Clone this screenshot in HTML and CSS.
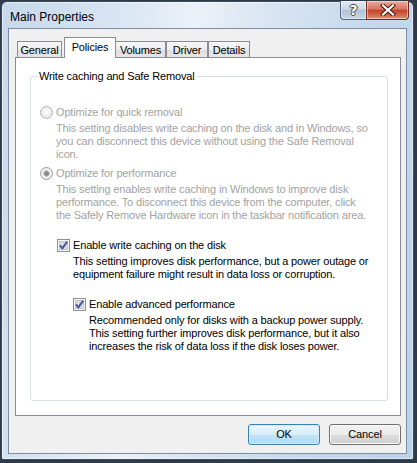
FILE: index.html
```html
<!DOCTYPE html>
<html>
<head>
    <title>Main Properties</title>
    <link rel="stylesheet" href="styles.css">
</head>
<body>
    <div class="window">
        <div class="titlebar">
            <span class="title">Main Properties</span>
            <div class="caption-buttons">
                <div class="cap-btn help">?</div>
                <div class="cap-btn close">
                    <svg width="16" height="12" viewBox="0 0 16 12">
                        <path d="M3 1.5 L13 10.5 M13 1.5 L3 10.5" stroke="#4a1a14" stroke-width="4.2" stroke-linecap="square"/>
                        <path d="M3 1.5 L13 10.5 M13 1.5 L3 10.5" stroke="#fff" stroke-width="2.2" stroke-linecap="square"/>
                    </svg>
                </div>
            </div>
        </div>

        <div class="client">
            <div class="tabs">
                <div class="tab tab-general">General</div>
                <div class="tab tab-policies active">Policies</div>
                <div class="tab tab-volumes">Volumes</div>
                <div class="tab tab-driver">Driver</div>
                <div class="tab tab-details">Details</div>
            </div>

            <div class="tab-panel">
                <fieldset class="group">
                    <legend>Write caching and Safe Removal</legend>

                    <div class="option disabled">
                        <span class="radio"></span>
                        <div class="option-body">
                            <div class="option-label">Optimize for quick removal</div>
                            <div class="option-desc">This setting disables write caching on the disk and in Windows, so<br>you can disconnect this device without using the Safe Removal<br>icon.</div>
                        </div>
                    </div>

                    <div class="option disabled second">
                        <span class="radio checked"></span>
                        <div class="option-body">
                            <div class="option-label">Optimize for performance</div>
                            <div class="option-desc">This setting enables write caching in Windows to improve disk<br>performance. To disconnect this device from the computer, click<br>the Safely Remove Hardware icon in the taskbar notification area.</div>

                            <div class="option sub first-check">
                                <span class="checkbox">
                                    <svg width="13" height="13" viewBox="0 0 13 13">
                                        <rect x="0.5" y="0.5" width="12" height="12" fill="#f6f6f6" stroke="#8e8f8f"/>
                                        <rect x="2.5" y="2.5" width="8" height="8" fill="#dcdde0" stroke="#c4c6ca"/>
                                        <path d="M3 6.3 L5.4 9.4 L10.2 2.6" fill="none" stroke="#45599c" stroke-width="2"/>
                                    </svg>
                                </span>
                                <div class="option-body">
                                    <div class="option-label">Enable write caching on the disk</div>
                                    <div class="option-desc">This setting improves disk performance, but a power outage or<br>equipment failure might result in data loss or corruption.</div>

                                    <div class="option sub">
                                        <span class="checkbox">
                                            <svg width="13" height="13" viewBox="0 0 13 13">
                                                <rect x="0.5" y="0.5" width="12" height="12" fill="#f6f6f6" stroke="#8e8f8f"/>
                                                <rect x="2.5" y="2.5" width="8" height="8" fill="#dcdde0" stroke="#c4c6ca"/>
                                                <path d="M3 6.3 L5.4 9.4 L10.2 2.6" fill="none" stroke="#45599c" stroke-width="2"/>
                                            </svg>
                                        </span>
                                        <div class="option-body">
                                            <div class="option-label">Enable advanced performance</div>
                                            <div class="option-desc">Recommended only for disks with a backup power supply.<br>This setting further improves disk performance, but it also<br>increases the risk of data loss if the disk loses power.</div>
                                        </div>
                                    </div>
                                </div>
                            </div>
                        </div>
                    </div>
                </fieldset>
            </div>

            <div class="buttons">
                <button class="btn default">OK</button>
                <button class="btn">Cancel</button>
            </div>
        </div>
    </div>
</body>
</html>
```

FILE: styles.css
```css
* {
    box-sizing: border-box;
}

body {
    margin: 0;
    width: 417px;
    height: 463px;
    overflow: hidden;
    background-color: #2e3b4a; /* desktop behind the window */
    font-family: "Liberation Sans", Arial, sans-serif;
    font-size: 12px;
    line-height: 13px;
    color: #000;
}

/* Aero glass frame */
.window {
    margin: 1px 0 0 1px;
    width: 413px;
    height: 459px;
    border: 1px solid #3a4858;
    border-radius: 6px 6px 2px 2px;
    background: linear-gradient(100deg, #c6d8eb 0%, #d6e4f2 22%, #ebf1f8 40%, #d8e5f2 55%, #c6d9ed 75%, #bcd2e9 100%);
    box-shadow: inset 0 0 0 1px rgba(255, 255, 255, 0.55);
    padding: 0 6px 5px 6px;
    display: flex;
    flex-direction: column;
}

.titlebar {
    height: 26px;
    display: flex;
    justify-content: space-between;
    align-items: flex-start;
}

.title {
    margin: 9px 0 0 2px;
    color: #000;
}

.caption-buttons {
    display: flex;
    margin: -1px -2px 0 0;
}

.cap-btn {
    height: 19px;
    border: 1px solid #55657a;
    border-top: none;
    display: flex;
    align-items: center;
    justify-content: center;
    box-shadow: inset 0 0 0 1px rgba(255, 255, 255, 0.45);
}

.help {
    width: 27px;
    border-radius: 0 0 0 4px;
    background: linear-gradient(#e3ebf3, #cbd8e6 45%, #b2c3d6 52%, #c7d7e8);
    color: #fff;
    font-family: "DejaVu Sans", sans-serif;
    font-weight: bold;
    font-size: 14px;
    text-shadow: 1px 0 #3b4a5c, -1px 0 #3b4a5c, 0 1px #3b4a5c, 0 -1px #3b4a5c;
}

.close {
    width: 43px;
    margin-left: -1px;
    border-color: #6e2a20;
    border-radius: 0 0 4px 0;
    background: linear-gradient(#e9ab9b, #d8735f 45%, #c2422a 52%, #d47458 85%, #e29a7e);
}

/* Client area */
.client {
    flex: 1;
    border: 1px solid #7d8da1;
    background-color: #f0f0f0;
    padding: 8px 5px 8px 6px;
    display: flex;
    flex-direction: column;
    font-size: 11px;
    letter-spacing: -0.15px;
}

.tabs {
    height: 20px;
    margin-left: 2px;
    display: flex;
    align-items: flex-end;
    position: relative;
    z-index: 1;
}

.tab {
    height: 16px;
    border: 1px solid #898c95;
    border-bottom: none;
    background: linear-gradient(#f7f7f7, #ececec 50%, #e0e0e0 51%, #e6e6e6);
    text-align: center;
    line-height: 16px;
}

.tab-general { width: 45px; margin-right: 2px; }
.tab-policies { width: 52px; }
.tab-volumes { width: 51px; margin-left: -1px; }
.tab-driver { width: 42px; }
.tab-details { width: 42px; }

.tab.active {
    height: 21px;
    margin-bottom: -1px;
    background: #fff;
    line-height: 18px;
    position: relative;
    z-index: 2;
}

.tab-panel {
    height: 359px;
    border: 1px solid #898c95;
    background-color: #fff;
    padding: 12px 12px 14px 14px;
    display: flex;
    flex-direction: column;
}

/* Group box */
.group {
    flex: 1;
    min-width: 0;
    margin: 0;
    border: 1px solid #d5dfe5;
    border-radius: 3px;
    padding: 23px 8px 0 9px;
}

.group legend {
    padding: 0 2px;
    margin-left: -3px;
}

.option {
    display: flex;
    align-items: flex-start;
}

.option.second {
    margin-top: 6px;
}

.option.sub {
    margin-top: 17px;
}

.option.first-check {
    margin-left: 1px;
}

.option-desc {
    margin-top: 3px;
    white-space: nowrap;
}

.option-label {
    white-space: nowrap;
}

.disabled > .option-body > .option-label,
.disabled > .option-body > .option-desc {
    color: #a2a2a2;
}

.radio {
    flex: none;
    width: 13px;
    height: 13px;
    margin-right: 3px;
    border-radius: 50%;
    border: 1px solid #b5b5b5;
    background: radial-gradient(circle at 50% 45%, #fbfbfb 0, #ececec 60%, #dcdcdc 100%);
}

.radio.checked {
    border-color: #999;
    background: radial-gradient(circle at 50% 50%, #7e7e7e 0, #9a9a9a 2.2px, #c4c4c4 3px, #f2f2f2 3.6px, #ececec 100%);
}

.checkbox {
    flex: none;
    width: 13px;
    height: 13px;
    margin-right: 3px;
    display: flex;
}

/* Dialog buttons */
.buttons {
    margin-top: 8px;
    display: flex;
    justify-content: flex-end;
    gap: 9px;
}

.btn {
    width: 72px;
    height: 21px;
    padding: 0;
    border: 1px solid #707070;
    border-radius: 3px;
    background: linear-gradient(#f2f2f2, #ebebeb 50%, #dddddd 51%, #cfcfcf);
    box-shadow: inset 0 0 0 1px #fbfbfb;
    font: inherit;
    letter-spacing: inherit;
    color: #000;
}

.btn.default {
    border-color: #3c7fb1;
    background: linear-gradient(#e9f5fc, #d7eefb 50%, #c1e3f7 51%, #b3dbf3);
    box-shadow: inset 0 0 0 1px #d4ecf9;
}
```
